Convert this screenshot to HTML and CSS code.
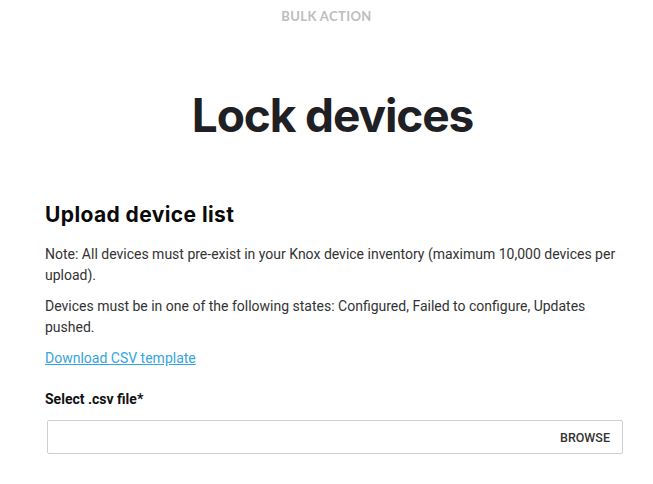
FILE: index.html
```html
<!DOCTYPE html>
<html>
<head>
<meta charset="utf-8">
<link rel="stylesheet" href="styles.css">
</head>
<body>
<div class="page">
  <div class="eyebrow">BULK ACTION</div>
  <h1 class="title">Lock devices</h1>
  <section class="upload">
    <h2 class="section-title">Upload device list</h2>
    <p class="note">Note: All devices must pre-exist in your Knox device inventory (maximum 10,000 devices per upload).</p>
    <p class="note">Devices must be in one of the following states: Configured, Failed to configure, Updates pushed.</p>
    <a class="link" href="#">Download CSV template</a>
    <div class="label">Select .csv file*</div>
    <div class="file-box"><span class="browse">BROWSE</span></div>
  </section>
</div>
</body>
</html>
```
FILE: styles.css
```css
* { box-sizing: border-box; }
html, body { margin: 0; padding: 0; background: #fff; }
body { font-family: Roboto, "Noto Sans", sans-serif; color: #222; }
.page { width: 653px; height: 484px; overflow: hidden; }
.eyebrow {
  text-align: center;
  font-family: Lato, sans-serif;
  font-weight: 700;
  font-size: 13px;
  letter-spacing: 0.4px;
  color: #bdbdbd;
  padding-top: 9px;
  line-height: 15px;
}
.title {
  margin: 0;
  text-align: center;
  font-family: Inter, sans-serif;
  font-weight: 700;
  font-size: 46px;
  letter-spacing: -1.1px;
  color: #1f2024;
  line-height: 56px;
  padding-top: 63px;
  padding-left: 12px;
}
.upload { padding: 0 30px 0 45px; }
.section-title {
  margin: 59px 0 0;
  font-family: Inter, sans-serif;
  font-weight: 700;
  font-size: 21px;
  letter-spacing: 0.4px;
  line-height: 26px;
  color: #0a0a0a;
}
.note {
  margin: 16px 0 0;
  font-size: 14px;
  line-height: 21px;
  color: #333;
}
.note + .note { margin-top: 10px; }
.link {
  display: block;
  margin-top: 10px;
  font-size: 14px;
  line-height: 21px;
  color: #35a5de;
  text-decoration: underline;
}
.label {
  margin-top: 20px;
  font-size: 14px;
  font-weight: 700;
  line-height: 21px;
  color: #111;
}
.file-box {
  margin: 10px 0 0 2px;
  height: 34px;
  border: 1px solid #cfcfcf;
  border-radius: 2px;
  display: flex;
  align-items: center;
  justify-content: flex-end;
  padding-right: 12px;
}
.browse {
  font-size: 12.5px;
  font-weight: 500;
  color: #333;
}
```
